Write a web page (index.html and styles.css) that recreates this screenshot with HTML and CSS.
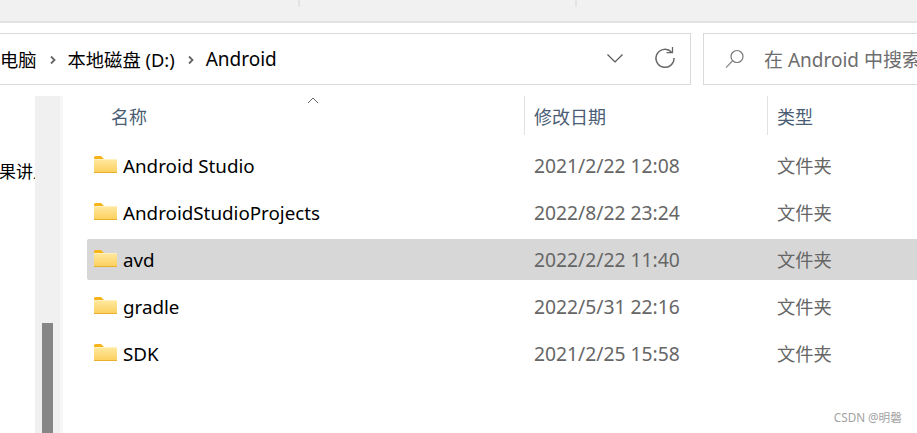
FILE: index.html
```html
<!DOCTYPE html>
<html lang="zh-CN">
<head>
  <meta charset="UTF-8">
  <title>Android</title>
  <link rel="stylesheet" href="styles.css">
</head>
<body>
  <div class="ribbon">
    <span class="rib-cell rib-a"></span>
    <span class="rib-cell rib-b"></span>
  </div>

  <div class="toolbar">
    <div class="address">
      <span class="crumb crumb-first">电脑</span>
      <svg class="chev" width="8" height="10" viewBox="0 0 8 10"><path d="M2 1.5 5.5 5 2 8.5" fill="none" stroke="#666" stroke-width="1.8"/></svg>
      <span class="crumb">本地磁盘 (D:)</span>
      <svg class="chev" width="8" height="10" viewBox="0 0 8 10"><path d="M2 1.5 5.5 5 2 8.5" fill="none" stroke="#666" stroke-width="1.8"/></svg>
      <span class="crumb crumb-last">Android</span>
      <svg class="drop" width="16" height="9" viewBox="0 0 16 9"><path d="M.5.5 8 8 15.5.5" fill="none" stroke="#555" stroke-width="1.2"/></svg>
      <svg class="refresh" width="22" height="22" viewBox="0 0 22 22"><path d="M17.6 5.2A9 9 0 1 0 20 11" fill="none" stroke="#666" stroke-width="1.5"/><path d="M12.5 5.6h6V0" fill="none" stroke="#666" stroke-width="1.3"/></svg>
    </div>
    <div class="search">
      <svg class="lens" width="20" height="20" viewBox="0 0 20 20"><circle cx="12" cy="7.5" r="6" fill="none" stroke="#777" stroke-width="1.2"/><path d="M7.6 11.8 1 18.6" fill="none" stroke="#8a8a8a" stroke-width="1.3"/></svg>
      <span class="search-text">在 Android 中搜索</span>
    </div>
  </div>

  <div class="main">
    <div class="side"><span class="side-text">果讲义</span></div>
    <div class="scroll"><div class="thumb"></div></div>
    <div class="files">
      <div class="head">
        <div class="col-name head-cell">名称</div>
        <div class="col-date head-cell sep">修改日期</div>
        <div class="col-type head-cell sep">类型</div>
        <svg class="sort" width="12" height="7" viewBox="0 0 12 7"><path d="M1 6 6 1 11 6" fill="none" stroke="#666" stroke-width="1"/></svg>
      </div>

      <div class="row">
        <div class="col-name name"><svg class="folder" width="23" height="18" viewBox="0 0 23 18"><use href="#folder"/></svg>Android Studio</div>
        <div class="col-date cell">2021/2/22 12:08</div>
        <div class="col-type cell">文件夹</div>
      </div>
      <div class="row">
        <div class="col-name name"><svg class="folder" width="23" height="18" viewBox="0 0 23 18"><use href="#folder"/></svg>AndroidStudioProjects</div>
        <div class="col-date cell">2022/8/22 23:24</div>
        <div class="col-type cell">文件夹</div>
      </div>
      <div class="row selected">
        <div class="col-name name"><svg class="folder" width="23" height="18" viewBox="0 0 23 18"><use href="#folder"/></svg>avd</div>
        <div class="col-date cell">2022/2/22 11:40</div>
        <div class="col-type cell">文件夹</div>
      </div>
      <div class="row">
        <div class="col-name name"><svg class="folder" width="23" height="18" viewBox="0 0 23 18"><use href="#folder"/></svg>gradle</div>
        <div class="col-date cell">2022/5/31 22:16</div>
        <div class="col-type cell">文件夹</div>
      </div>
      <div class="row">
        <div class="col-name name"><svg class="folder" width="23" height="18" viewBox="0 0 23 18"><use href="#folder"/></svg>SDK</div>
        <div class="col-date cell">2021/2/25 15:58</div>
        <div class="col-type cell">文件夹</div>
      </div>
    </div>
  </div>

  <div class="mark">CSDN @明磐</div>

  <svg class="defs" width="0" height="0">
    <defs>
      <linearGradient id="fold" x1="0" y1="0" x2="0" y2="1">
        <stop offset="0" stop-color="#ffe9a0"/>
        <stop offset="1" stop-color="#fccf5c"/>
      </linearGradient>
      <g id="folder">
        <path d="M0 2.5Q0 1 1.5 1H7L9.5 3.5V6H0Z" fill="#f6b31a"/>
        <rect x="0" y="4" width="23" height="14" fill="url(#fold)"/>
        <rect x="0" y="17" width="23" height="1" fill="#e9b030"/>
        <rect x="0" y="4" width="23" height="1" fill="#fff0bd"/>
      </g>
    </defs>
  </svg>
</body>
</html>
```

FILE: styles.css
```css
html, body {
  margin: 0;
  padding: 0;
  height: 433px;
  overflow: hidden;
  background: #fff;
}
body {
  font-family: "Noto Sans", "Noto Sans CJK SC", sans-serif;
  color: #000;
  position: relative;
}

.ribbon {
  height: 21px;
  background: #f1f1f1;
  border-bottom: 2px solid #e3e3e3;
  display: flex;
}
.rib-cell {
  height: 7px;
  border-right: 2px solid #e3e3e3;
}
.rib-a { width: 298px; }
.rib-b { width: 275px; }

.toolbar {
  display: flex;
  gap: 12px;
  margin-top: 10px;
  height: 52px;
}
.address {
  width: 690px;
  border: 1px solid #d9d9d9;
  border-left: none;
  display: flex;
  align-items: center;
  font-size: 18.3px;
}
.crumb { white-space: nowrap; }
.crumb-last { font-size: 19px; }
.chev { margin: 1px 11px 0 12px; }
.drop { margin-left: auto; margin-top: -2px; }
.refresh { margin: -2px 14px 0 31px; }
.search {
  flex: 1;
  border: 1px solid #d9d9d9;
  border-right: none;
  display: flex;
  align-items: center;
  padding-left: 21px;
  overflow: hidden;
}
.lens { flex: none; }
.search-text {
  margin-left: 19px;
  font-size: 19px;
  color: #6d6d6d;
  white-space: nowrap;
}

.main {
  display: flex;
  margin-top: 11px;
  height: 337px;
}
.side {
  width: 35px;
  overflow: hidden;
  padding-top: 63px;
  font-size: 17px;
  line-height: 26px;
  flex: none;
}
.side-text {
  display: block;
  margin-left: -1px;
  white-space: nowrap;
}
.scroll {
  background: #f0f0f0;
  border-right: 3px solid #f7f7f7;
  flex: none;
  padding: 227px 0 0 7px;
  width: 18px;
}
.thumb {
  width: 11px;
  height: 110px;
  background: #868686;
}

.files {
  flex: 1;
  padding: 0 0 0 24px;
  position: relative;
}
.head {
  display: flex;
  height: 39px;
  margin-bottom: 10px;
  align-items: stretch;
  font-size: 18px;
  color: #4a5d74;
}
.head-cell {
  display: flex;
  align-items: center;
  box-sizing: border-box;
}
.head .col-name { padding-left: 24px; width: 437px; }
.head .col-date { width: 243px; }
.sep {
  border-left: 1px solid #e2e2e2;
  padding-left: 9px;
}
.sort {
  position: absolute;
  left: 244px;
  top: 1px;
}

.row {
  display: flex;
  align-items: center;
  height: 41px;
  margin-bottom: 6px;
  font-size: 18.8px;
  border-radius: 2px 0 0 2px;
}
.selected { background: #d7d7d7; }
.col-name { width: 438px; flex: none; }
.col-date { width: 242px; flex: none; }
.col-type { flex: 1; }
.name {
  display: flex;
  align-items: center;
  padding-left: 7px;
  box-sizing: border-box;
}
.folder {
  margin-right: 6px;
  margin-top: -3px;
  flex: none;
}
.cell {
  color: #666;
  padding-left: 9px;
  box-sizing: border-box;
}
.col-date.cell { font-size: 19.3px; }
.col-type.cell { font-size: 18.3px; margin-top: -2px; padding-left: 10px; }

.mark {
  position: absolute;
  right: 15px;
  bottom: 8px;
  font-size: 11.7px;
  color: #a3a3a3;
}
.defs { position: absolute; }
```
